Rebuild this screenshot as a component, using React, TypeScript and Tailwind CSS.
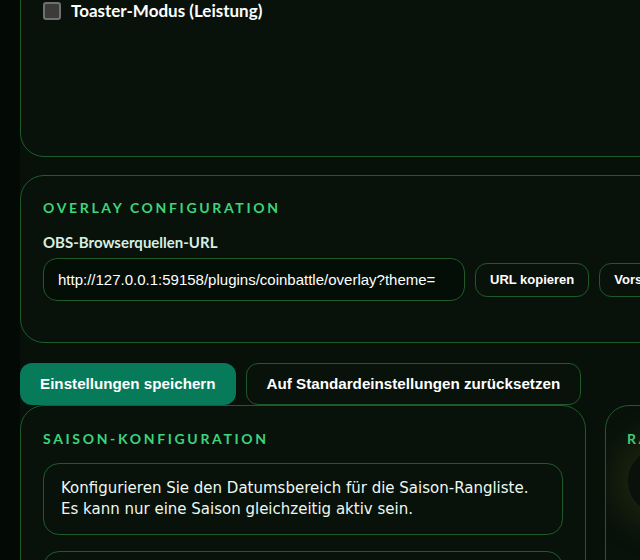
import React, { useState } from 'react';

const geo = { fontFamily: 'Lato, "DejaVu Sans", sans-serif' };
const body = { fontFamily: '"DejaVu Sans", "Noto Sans", sans-serif' };
const arial = { fontFamily: '"Liberation Sans", Arial, sans-serif' };

const SectionTitle = ({ children }: { children: React.ReactNode }) => (
  <h2 className="text-[14px] font-bold uppercase leading-none tracking-[0.19em] text-[#3dd47a]" style={geo}>
    {children}
  </h2>
);

export default function App() {
  const [toaster, setToaster] = useState(false);
  const overlayUrl = 'http://127.0.0.1:59158/plugins/coinbattle/overlay?theme=';

  return (
    <div className="flex h-[560px] w-[640px] overflow-hidden bg-[#030904]" style={body}>
      <div className="w-[20px] shrink-0 bg-[#030904]" />
      <main className="flex-1 overflow-hidden bg-[#07110a]">
        <div className="flex w-[700px] flex-col">
          {/* general settings, scrolled */}
          <section className="-mt-[40px] h-[197px] rounded-[24px] border border-[#1f5a2a] bg-[#08120b] px-[22px] pt-[37px]">
            <label className="flex items-center gap-[10px] text-[17px] font-bold text-white" style={geo}>
              <input
                type="checkbox"
                checked={toaster}
                onChange={(e) => setToaster(e.target.checked)}
                className="h-[18px] w-[18px] shrink-0 appearance-none rounded-[3px] border-2 border-[#707070] bg-[#3b3b3b]"
              />
              Toaster-Modus (Leistung)
            </label>
          </section>

          <section className="mt-[18px] h-[168px] rounded-[24px] border border-[#1f5a2a] bg-[#08120b] px-[22px] pt-[25px]">
            <SectionTitle>Overlay Configuration</SectionTitle>
            <div className="mt-[20px] text-[15px] font-bold leading-none text-[#d8efe0]" style={geo}>
              OBS-Browserquellen-URL
            </div>
            <div className="mt-[8px] flex items-center gap-[10px]" style={arial}>
              <input
                readOnly
                value={overlayUrl}
                className="h-[43px] w-[422px] shrink-0 rounded-[14px] border border-[#1f5a2a] bg-[#050d07] px-[14px] text-[15px] text-white outline-none"
              />
              <button className="h-[34px] shrink-0 whitespace-nowrap rounded-[12px] border border-[#1f5a2a] px-[14px] text-[13px] font-bold text-white">
                URL kopieren
              </button>
              <button className="h-[34px] shrink-0 whitespace-nowrap rounded-[12px] border border-[#1f5a2a] px-[14px] text-[13px] font-bold text-white">
                Vorschau öffnen
              </button>
            </div>
          </section>

          <div className="mt-[20px] flex gap-[10px]" style={arial}>
            <button className="h-[42px] shrink-0 whitespace-nowrap rounded-[12px] bg-[#077a59] px-[20px] text-[15.2px] font-bold text-white">
              Einstellungen speichern
            </button>
            <button className="h-[42px] shrink-0 whitespace-nowrap rounded-[12px] border border-[#1f5a2a] bg-[#08120b] px-[20px] text-[15.2px] font-bold text-white">
              Auf Standardeinstellungen zurücksetzen
            </button>
          </div>

          <div className="flex gap-[19px]">
            <section className="h-[200px] w-[566px] shrink-0 rounded-[24px] border border-[#1f5a2a] bg-[#08120b] px-[22px] pt-[26px]">
              <SectionTitle>Saison-Konfiguration</SectionTitle>
              <div className="mt-[17px] rounded-[16px] border border-[#1f5a2a] px-[17px] py-[14px] text-[15px] leading-[21px] text-[#eef8f0]">
                Konfigurieren Sie den Datumsbereich für die Saison-Rangliste.
                <br />
                Es kann nur eine Saison gleichzeitig aktiv sein.
              </div>
              <div className="mt-[16px] h-[60px] rounded-[16px] border border-[#1f5a2a]" />
            </section>
            <section className="relative h-[200px] w-[200px] shrink-0 overflow-hidden rounded-[24px] border border-[#1f5a2a] bg-[#08120b] px-[21px] pt-[26px]">
              <SectionTitle>Rangliste</SectionTitle>
              {/* trophy glow */}
              <div className="absolute left-[22px] top-[42px] h-[66px] w-[66px] rounded-full bg-[#0a100a] shadow-[0_0_32px_14px_rgba(110,95,30,0.22)]" />
            </section>
          </div>
        </div>
      </main>
    </div>
  );
}
